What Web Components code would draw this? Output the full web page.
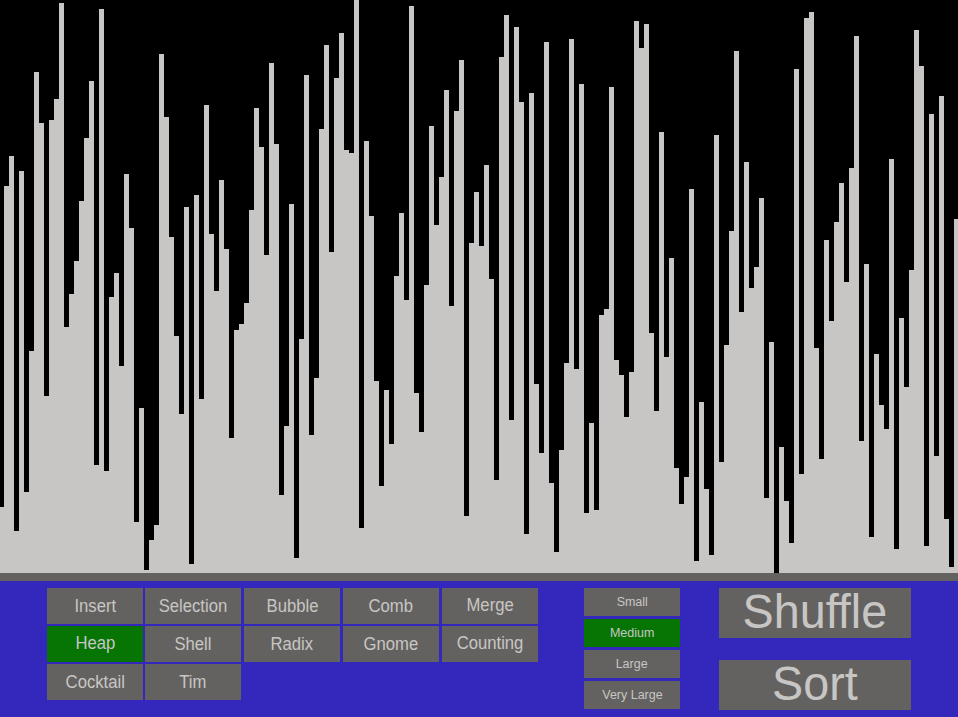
<!DOCTYPE html>
<html lang="en">
<head>
<meta charset="utf-8">
<title>Sorting Visualizer</title>
<style>
  html, body { margin: 0; height: 100%; overflow: hidden; background: #000; }
</style>
</head>
<body>
<sort-app></sort-app>
<script>
// Bars: one per element, 5px wide, 3px of height per unit of value.
class BarChart extends HTMLElement {
  connectedCallback() {
    const depths = this.getAttribute('depths').trim().split(/\s+/);
    const root = this.attachShadow({ mode: 'open' });
    root.innerHTML = `<style>
      :host { display: block; height: 573px; overflow: hidden; background: #000; }
      .bars { display: flex; margin-left: -1px; height: 100%; align-items: flex-end; }
      i { flex: 0 0 5px; background: #c8c6c4; }
    </style><div class="bars">${depths.map(d => `<i style="height:${(191 - d) * 3}px"></i>`).join('')}</div>`;
  }
}
customElements.define('bar-chart', BarChart);

class PanelButton extends HTMLElement {
  connectedCallback() {
    const root = this.attachShadow({ mode: 'open' });
    root.innerHTML = `<style>
      :host { display: flex; align-items: center; justify-content: center; box-sizing: border-box;
        background: #646260; color: #c8c6c4; white-space: nowrap; line-height: 1;
        height: var(--button-height, 36px); font-size: var(--button-font, 17px); }
      :host([active]) { background: #067504; }
      :host([raised]) { padding-bottom: 2px; }
      span { display: block; transform: translateY(var(--shift, -0.5px)) scale(var(--narrow, 0.98), var(--tall, 1.04)); }
    </style><span><slot></slot></span>`;
  }
}
customElements.define('panel-button', PanelButton);

class ButtonGrid extends HTMLElement {
  connectedCallback() {
    this.attachShadow({ mode: 'open' }).innerHTML = `<style>
      :host { display: grid; align-content: start; justify-content: start; }
      :host([kind="algorithms"]) { grid-template-columns: 98px 99px 99px 99px 96px; row-gap: 2px; justify-items: start; }
      :host([kind="algorithms"]) ::slotted(*) { width: 96px; }
      :host([kind="sizes"]) { grid-template-columns: 96px; row-gap: 3px; --button-height: 28px; --button-font: 13px; --narrow: 0.96; --shift: -0.75px; }
      :host([kind="actions"]) { grid-template-columns: 192px; row-gap: 22px; --button-height: 50px; --button-font: 49px; --narrow: 0.953; --tall: 1; --shift: -2px; }
    </style><slot></slot>`;
  }
}
customElements.define('button-grid', ButtonGrid);

class SortApp extends HTMLElement {
  connectedCallback() {
    this.attachShadow({ mode: 'open' }).innerHTML = `<style>
      :host { display: block; width: 958px; height: 717px; overflow: hidden;
        font-family: "Liberation Sans", Arial, sans-serif; }
      footer { box-sizing: border-box; height: 144px; background: #3428bc; border-top: 8px solid #646260;
        display: flex; align-items: flex-start; padding: 7px 0 0 47px; }
      .sizes { margin-left: 46px; }
      .actions { margin-left: 39px; }
    </style>
    <bar-chart depths="
      169 62 52 177 57 164 117 24 41 132 40 33 1 109 98 87 67 46 27 155 3 157 99 91 122
      58 76 174 136 190 180 175 18 39 79 112 138 69 188 65 133 35 78 97 60 83 146 110 108
      101 70 36 49 85 21 48 165 142 68 186 113 25 145 126 43 15 84 26 11 50 51 0 176
      47 72 127 162 130 148 92 71 100 2 131 144 95 42 75 59 30 102 37 20 172 81 64 82
      55 93 160 19 5 140 9 34 178 31 128 151 14 161 184 150 121 13 123 28 171 141 170 105
      103 29 120 125 139 124 7 16 8 111 137 44 119 86 156 168 159 63 187 134 163 185 45 154
      115 77 17 104 54 96 89 66 166 114 191 149 167 181 23 158 6 4 116 153 80 107 74 61
      94 56 12 147 88 179 118 135 143 53 183 106 129 90 10 22 182 38 152 32 173 189 73"></bar-chart>
    <footer>
      <button-grid kind="algorithms">
        <panel-button>Insert</panel-button><panel-button>Selection</panel-button><panel-button>Bubble</panel-button><panel-button>Comb</panel-button><panel-button raised>Merge</panel-button>
        <panel-button active raised>Heap</panel-button><panel-button>Shell</panel-button><panel-button>Radix</panel-button><panel-button>Gnome</panel-button><panel-button raised>Counting</panel-button>
        <panel-button>Cocktail</panel-button><panel-button>Tim</panel-button>
      </button-grid>
      <button-grid kind="sizes" class="sizes">
        <panel-button>Small</panel-button><panel-button active>Medium</panel-button><panel-button>Large</panel-button><panel-button>Very Large</panel-button>
      </button-grid>
      <button-grid kind="actions" class="actions">
        <panel-button>Shuffle</panel-button><panel-button>Sort</panel-button>
      </button-grid>
    </footer>`;
  }
}
customElements.define('sort-app', SortApp);
</script>
</body>
</html>
